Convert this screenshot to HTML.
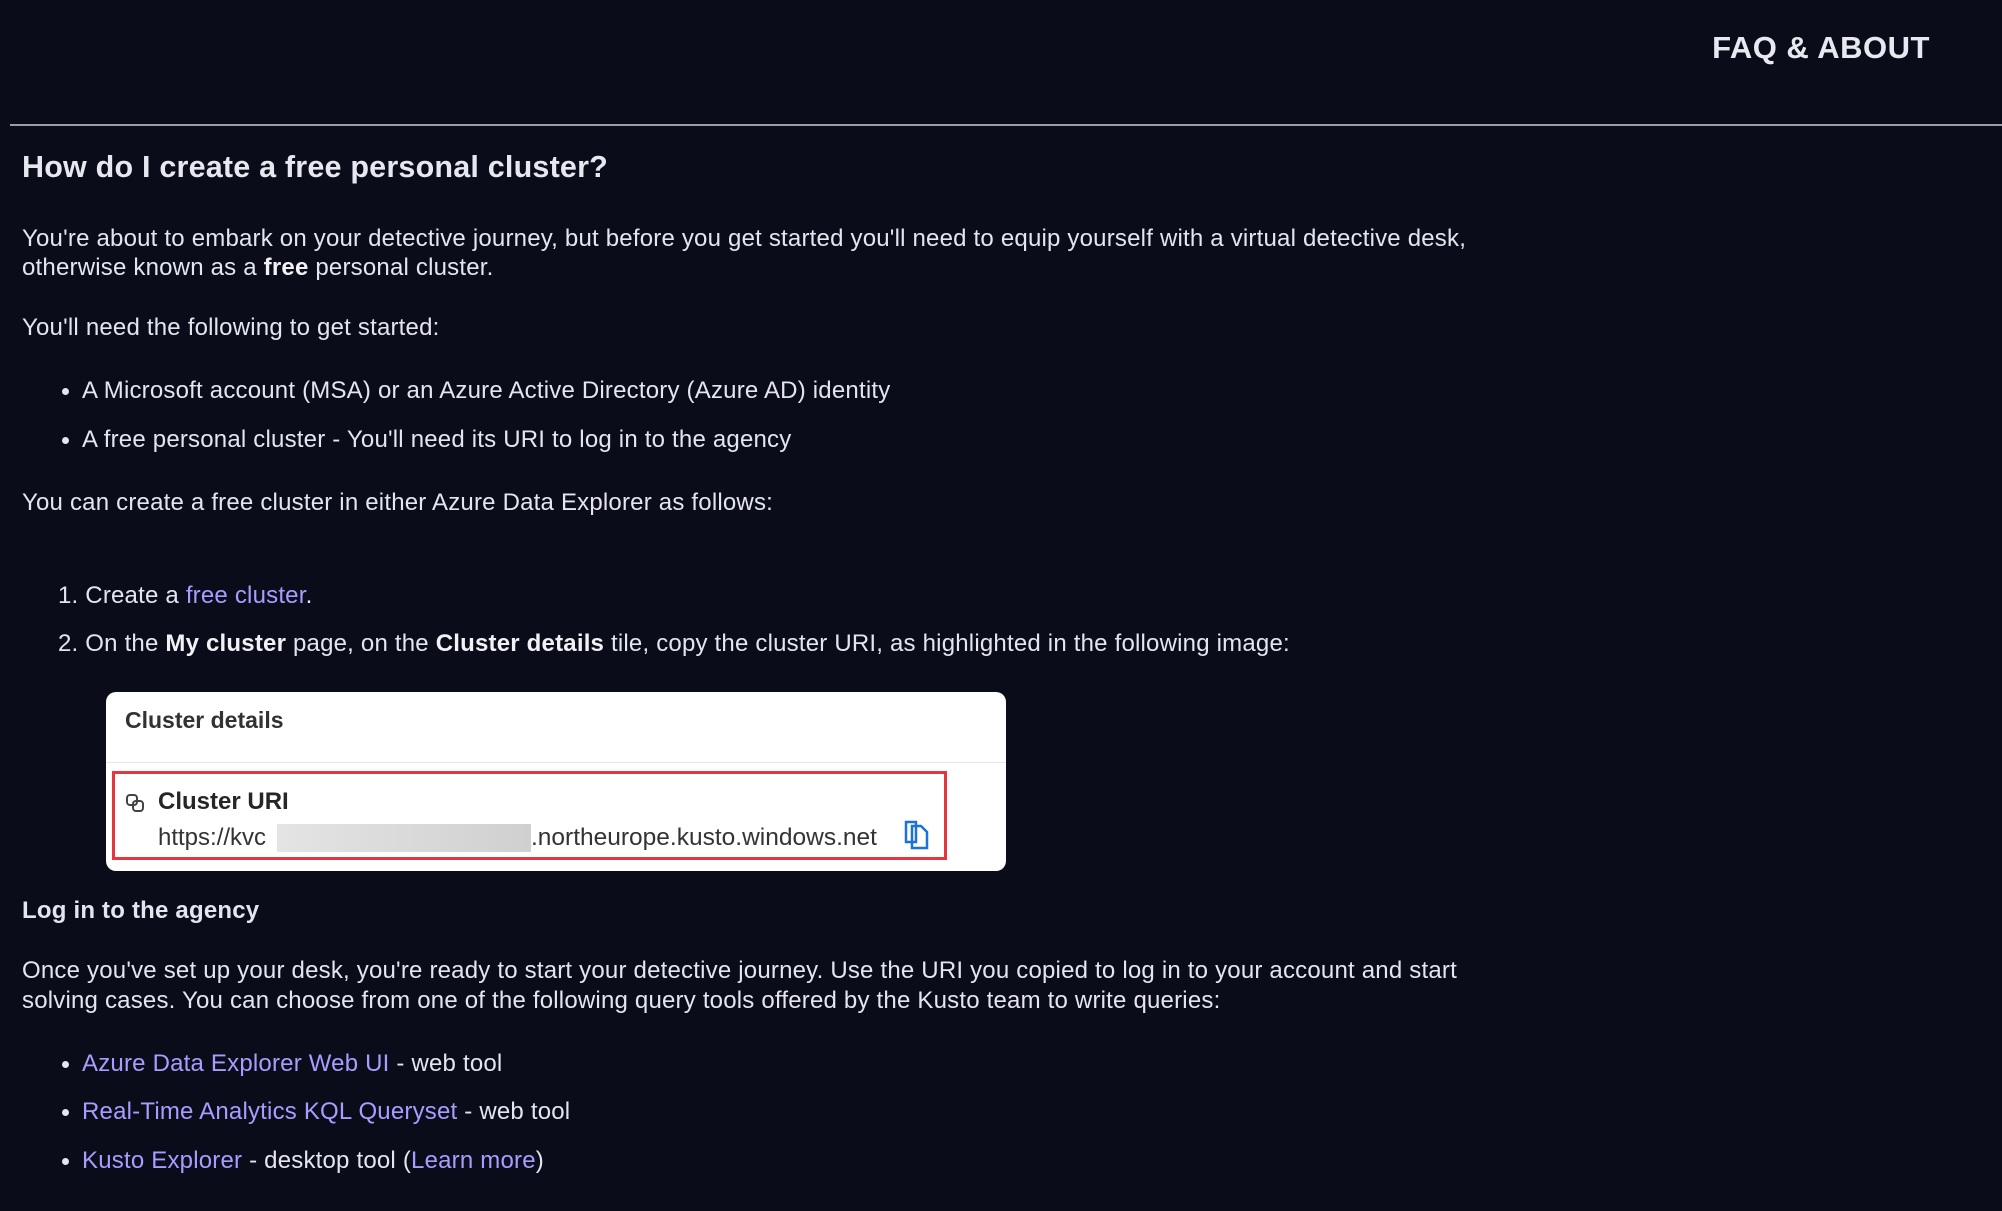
<!DOCTYPE html>
<html><head><meta charset="utf-8"><style>
html,body{margin:0;padding:0}
body{width:2002px;height:1211px;background:#0a0c19;position:relative;overflow:hidden;font-family:"Liberation Sans",sans-serif;color:#e4e5ee}
.t{position:absolute;white-space:nowrap;font-size:24px;line-height:28px;letter-spacing:0.2px}
a{color:#a79dff;text-decoration:none}
b{font-weight:bold;color:#f2f2f6}
.dot{position:absolute;width:7px;height:7px;border-radius:50%;background:#e4e5ee}
.c{letter-spacing:0}
</style></head><body>
<div class="t" style="right:72px;top:30px;font-size:31px;line-height:36px;font-weight:bold;color:#e8e9f0;letter-spacing:0.5px">FAQ &amp; ABOUT</div>
<div style="position:absolute;left:10px;right:0;top:124px;height:2px;background:#9a9ca8"></div>
<div class="t" style="left:22px;top:150px;font-size:30.5px;line-height:34px;font-weight:bold;color:#e6e7ef">How do I create a free personal cluster?</div>
<div class="t" style="left:22px;top:225px">You're about to embark on your detective journey, but before you get started you'll need to equip yourself with a virtual detective desk,</div>
<div class="t" style="left:22px;top:254px">otherwise known as a <b>free</b> personal cluster.</div>
<div class="t" style="left:22px;top:314px">You'll need the following to get started:</div>
<div class="dot" style="left:62px;top:388px"></div>
<div class="t" style="left:82px;top:377px">A Microsoft account (MSA) or an Azure Active Directory (Azure AD) identity</div>
<div class="dot" style="left:62px;top:437px"></div>
<div class="t" style="left:82px;top:426px">A free personal cluster - You'll need its URI to log in to the agency</div>
<div class="t" style="left:22px;top:489px">You can create a free cluster in either Azure Data Explorer as follows:</div>
<div class="t" style="left:58px;top:582px">1. Create a <a>free cluster</a>.</div>
<div class="t" style="left:58px;top:630px">2. On the <b>My cluster</b> page, on the <b>Cluster details</b> tile, copy the cluster URI, as highlighted in the following image:</div>
<div style="position:absolute;left:106px;top:692px;width:900px;height:179px;background:#fff;border-radius:10px">
  <div class="t c" style="left:19px;top:14px;font-size:23px;color:#323232;font-weight:bold">Cluster details</div>
  <div style="position:absolute;left:0;right:0;top:70px;height:1px;background:#e6e6e6"></div>
  <div style="position:absolute;left:6px;top:79px;width:835px;height:89px;border:3px solid #e5353d;box-sizing:border-box"></div>
  <svg style="position:absolute;left:19px;top:101px" width="20" height="20" viewBox="0 0 20 20" fill="none" stroke="#444" stroke-width="2"><rect x="2" y="2" width="10" height="10" rx="3"/><rect x="8" y="8" width="10" height="10" rx="3"/></svg>
  <div class="t c" style="left:52px;top:96px;font-size:24px;color:#262626;font-weight:bold">Cluster URI</div>
  <div class="t c" style="left:52px;top:132px;font-size:24px;color:#333">https://kvc</div>
  <div style="position:absolute;left:171px;top:132px;width:254px;height:28px;background:linear-gradient(90deg,#e4e4e4,#d0d0d0)"></div>
  <div class="t c" style="left:425px;top:132px;font-size:24.5px;color:#333">.northeurope.kusto.windows.net</div>
  <svg style="position:absolute;left:797px;top:126px" width="28" height="32" viewBox="0 0 28 32" fill="none" stroke="#1a73d9" stroke-width="2.5"><path d="M3 4h10v20H3z"/><path d="M9 8h9l6 6v16H9z"/></svg>
</div>
<div class="t" style="left:22px;top:897px;font-weight:bold">Log in to the agency</div>
<div class="t" style="left:22px;top:957px">Once you've set up your desk, you're ready to start your detective journey. Use the URI you copied to log in to your account and start</div>
<div class="t" style="left:22px;top:987px">solving cases. You can choose from one of the following query tools offered by the Kusto team to write queries:</div>
<div class="dot" style="left:62px;top:1061px"></div>
<div class="t" style="left:82px;top:1050px"><a>Azure Data Explorer Web UI</a> - web tool</div>
<div class="dot" style="left:62px;top:1109px"></div>
<div class="t" style="left:82px;top:1098px"><a>Real-Time Analytics KQL Queryset</a> - web tool</div>
<div class="dot" style="left:62px;top:1158px"></div>
<div class="t" style="left:82px;top:1147px"><a>Kusto Explorer</a> - desktop tool (<a>Learn more</a>)</div>
</body></html>
